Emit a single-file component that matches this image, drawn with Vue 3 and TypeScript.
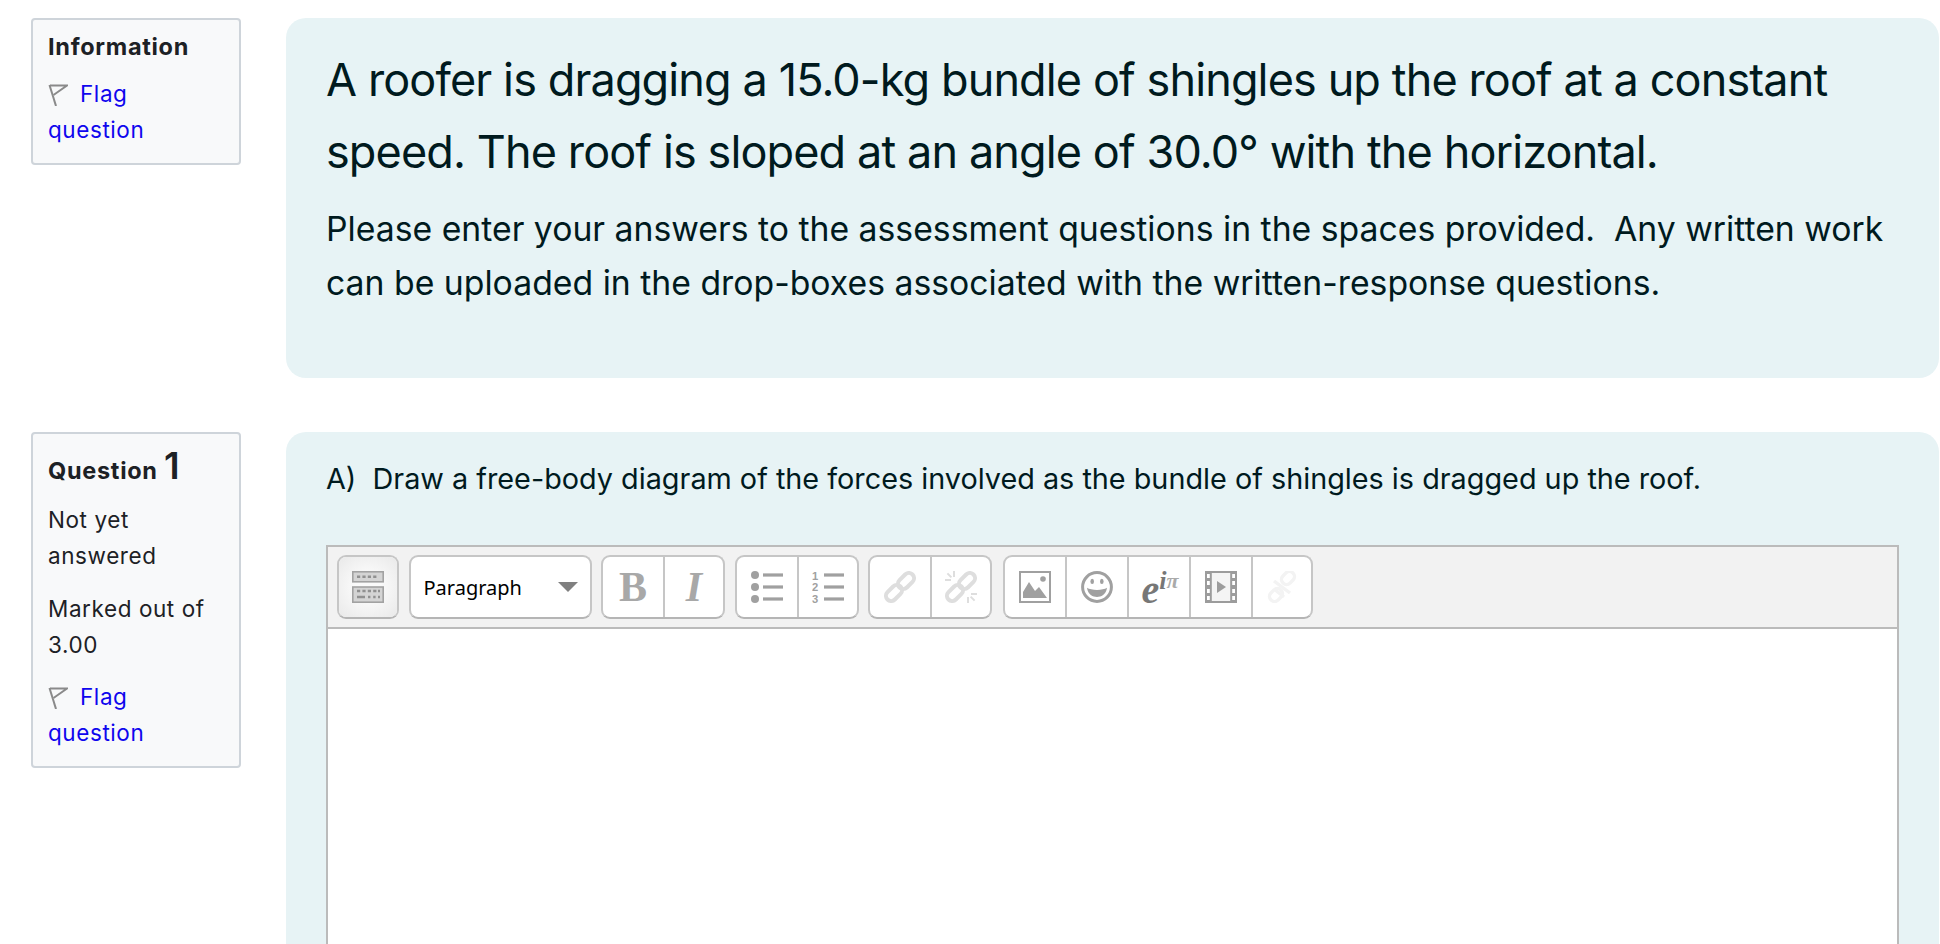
<script setup lang="ts">
</script>

<template>
  <div class="page">
    <section class="que">
      <aside class="info">
        <h3 class="label">Information</h3>
        <a class="flag" href="#">
          <svg class="flag-icon" viewBox="0 0 20 22"><path d="M1.5 1 L8 22" /><path d="M2 1.5 L19 1.5 L5.5 11" /></svg>Flag question
        </a>
      </aside>
      <div class="content content-intro">
        <p class="lead">A roofer is dragging a 15.0-kg bundle of shingles up the roof at a constant speed. The roof is sloped at an angle of 30.0° with the horizontal.</p>
        <p class="body">Please enter your answers to the assessment questions in the spaces provided.&nbsp; Any written work can be uploaded in the drop-boxes associated with the written-response questions.</p>
      </div>
    </section>

    <section class="que">
      <aside class="info">
        <h3 class="label label-q">Question <span class="qno">1</span></h3>
        <p class="state">Not yet answered</p>
        <p class="state state-last">Marked out of 3.00</p>
        <a class="flag" href="#">
          <svg class="flag-icon" viewBox="0 0 20 22"><path d="M1.5 1 L8 22" /><path d="M2 1.5 L19 1.5 L5.5 11" /></svg>Flag question
        </a>
      </aside>
      <div class="content content-q">
        <p class="prompt">A)&nbsp; Draw a free-body diagram of the forces involved as the bundle of shingles is dragged up the roof.</p>
        <div class="editor">
          <div class="toolbar">
            <div class="group">
              <button class="btn btn-on">
                <svg class="ico" viewBox="0 0 16 16">
                  <rect x="0.4" y="0.4" width="15.2" height="5" fill="#d4d4d4" stroke="#a2a2a2" stroke-width="0.8" />
                  <rect x="0.4" y="8" width="15.2" height="7.6" fill="#d4d4d4" stroke="#a2a2a2" stroke-width="0.8" />
                  <path d="M2.5 2.9h1.6M5.2 2.9h1.6M7.9 2.9h1.6M10.6 2.9h1.6M2.5 10h1.6M5.2 10h1.6M7.9 10h1.6M10.6 10h1.6M13 10h1M2.5 13h4M8 13h1.2M10.6 13h1.2M13 13h1" stroke="#909090" stroke-width="1.2" />
                </svg>
              </button>
            </div>
            <div class="group">
              <button class="select">
                <span>Paragraph</span>
                <i class="caret"></i>
              </button>
            </div>
            <div class="group">
              <button class="btn"><span class="glyph glyph-b">B</span></button>
              <button class="btn"><span class="glyph glyph-i">I</span></button>
            </div>
            <div class="group">
              <button class="btn">
                <svg class="ico" viewBox="0 0 16 16" fill="#a0a0a0">
                  <circle cx="2" cy="2" r="2" /><circle cx="2" cy="8" r="2" /><circle cx="2" cy="14" r="2" />
                  <rect x="6" y="1.2" width="10" height="1.6" /><rect x="6" y="7.2" width="10" height="1.6" /><rect x="6" y="13.2" width="10" height="1.6" />
                </svg>
              </button>
              <button class="btn">
                <svg class="ico" viewBox="0 0 16 16" fill="#a0a0a0">
                  <text class="ico-num" x="0" y="4.3">1</text><text class="ico-num" x="0" y="10.1">2</text><text class="ico-num" x="0" y="15.9">3</text>
                  <rect x="6" y="1.2" width="10" height="1.6" /><rect x="6" y="7.2" width="10" height="1.6" /><rect x="6" y="13.2" width="10" height="1.6" />
                </svg>
              </button>
            </div>
            <div class="group">
              <button class="btn">
                <svg class="ico" viewBox="0 0 16 16" fill="none" stroke="#dedede" stroke-width="2">
                  <rect x="6.4" y="2.4" width="9.2" height="5.2" rx="2.6" transform="rotate(-45 11 5)" />
                  <rect x="0.4" y="8.4" width="9.2" height="5.2" rx="2.6" transform="rotate(-45 5 11)" />
                </svg>
              </button>
              <button class="btn">
                <svg class="ico" viewBox="0 0 16 16" fill="none" stroke="#dedede" stroke-width="2">
                  <rect x="6.4" y="2.4" width="9.2" height="5.2" rx="2.6" transform="rotate(-45 11 5)" />
                  <rect x="0.4" y="8.4" width="9.2" height="5.2" rx="2.6" transform="rotate(-45 5 11)" />
                  <path d="M0 4.5h3M4.5 0v3M1.2 1.2l2 2M16 11.5h-3M11.5 16v-3M14.8 14.8l-2-2" stroke-width="1" />
                </svg>
              </button>
            </div>
            <div class="group group-media">
              <button class="btn">
                <svg class="ico" viewBox="0 0 16 16">
                  <rect x="0.5" y="0.5" width="15" height="15" fill="#fff" stroke="#a0a0a0" />
                  <path d="M2 13.5 L2 10.5 L5 5.5 L8 10 L10 8 L14 13.5 Z" fill="#a0a0a0" />
                  <circle cx="12" cy="4" r="1.4" fill="#a0a0a0" />
                </svg>
              </button>
              <button class="btn">
                <svg class="ico" viewBox="0 0 16 16" fill="none" stroke="#a0a0a0">
                  <circle cx="8" cy="8" r="7.2" stroke-width="1.5" />
                  <ellipse cx="5.6" cy="5.2" rx="0.9" ry="1.3" fill="#a0a0a0" stroke="none" />
                  <ellipse cx="10.4" cy="5.2" rx="0.9" ry="1.3" fill="#a0a0a0" stroke="none" />
                  <path d="M3 8.4 C5 9.8 11 9.8 13 8.4 C12.5 12 10 13 8 13 C6 13 3.5 12 3 8.4 Z" fill="#a0a0a0" stroke="none" />
                </svg>
              </button>
              <button class="btn">
                <span class="eq"><span class="eq-e">e</span><span class="eq-i">i</span><span class="eq-p">π</span></span>
              </button>
              <button class="btn">
                <svg class="ico" viewBox="0 0 16 16">
                  <rect width="16" height="16" fill="#9c9c9c" />
                  <rect x="3.4" y="1" width="9.2" height="14" fill="#f4f4f4" />
                  <path d="M1 1.5h1.4v2H1zM1 5h1.4v2H1zM1 9h1.4v2H1zM1 12.5h1.4v2H1zM13.6 1.5H15v2h-1.4zM13.6 5H15v2h-1.4zM13.6 9H15v2h-1.4zM13.6 12.5H15v2h-1.4z" fill="#fff" />
                  <path d="M6 5 L10.5 8 L6 11 Z" fill="#9c9c9c" />
                </svg>
              </button>
              <button class="btn">
                <svg class="ico" viewBox="0 0 16 16" fill="none" stroke="#f3f3f3" stroke-width="1.7">
                  <rect x="7.5" y="1" width="7" height="5" rx="2.4" transform="rotate(-45 11 3.5)" />
                  <rect x="1.5" y="9.5" width="7" height="5" rx="2.4" transform="rotate(-45 5 12)" />
                  <path d="M4 5 L12 11 M4 9 L9 13" />
                </svg>
              </button>
            </div>
          </div>
          <div class="area"></div>
        </div>
      </div>
    </section>
  </div>
</template>

<style scoped>
.page {
  height: 944px;
  overflow: hidden;
  box-sizing: border-box;
  padding: 18px 1px 0 31px;
  background: #fff;
  font-family: Inter, "Noto Sans", sans-serif;
  display: flex;
  flex-direction: column;
  gap: 54px;
}
.que {
  display: flex;
  align-items: flex-start;
  gap: 45px;
}
.info {
  width: 210px;
  flex: none;
  box-sizing: border-box;
  padding: 11px 15px 15px;
  background: #f8f9fa;
  border: 2px solid #ced4da;
  border-radius: 4px;
  color: #1d2125;
  font-size: 22.5px;
  letter-spacing: 0.58px;
  line-height: 36px;
}
.label {
  margin: 0 0 13px;
  font-size: 23.5px;
  letter-spacing: 0.7px;
  font-weight: 700;
  line-height: 32px;
}
.label-q {
  padding-top: 5px;
  margin-bottom: 15px;
}
.qno {
  font-size: 37px;
  font-weight: 600;
  letter-spacing: 0;
  line-height: 32px;
}
.state {
  margin: 0 0 17px;
}
.state-last {
  margin-bottom: 16px;
}
.flag {
  display: block;
  color: #0f06ee;
  text-decoration: none;
}
.flag-icon {
  width: 20px;
  height: 22px;
  margin-right: 12px;
  vertical-align: -4px;
  fill: none;
  stroke: #8a8a8a;
  stroke-width: 2;
}
.content {
  flex: 1;
  box-sizing: border-box;
  background: #e7f3f5;
  border-radius: 20px;
  padding: 0 40px;
  color: #001a1e;
}
.content-intro {
  height: 360px;
  padding-top: 26px;
}
.content-q {
  height: 600px;
  padding-top: 27px;
}
.lead {
  margin: 0 0 14px;
  font-size: 45px;
  letter-spacing: -0.88px;
  line-height: 72px;
}
.body {
  margin: 0;
  font-size: 33.75px;
  line-height: 54px;
}
.prompt {
  margin: 0 0 46px;
  font-size: 28.8px;
  line-height: 40px;
}
.editor {
  width: 1569px;
  border: 2px solid #bbb;
  border-bottom: none;
}
.toolbar {
  display: flex;
  gap: 9.5px;
  height: 82px;
  box-sizing: border-box;
  padding: 8px 9px;
  background: #f2f2f2;
  border-bottom: 2px solid #bbb;
}
.group {
  display: flex;
  height: 64px;
  box-sizing: border-box;
  background: #fff;
  border: 2px solid #c6c6c6;
  border-bottom-color: #b5b5b5;
  border-radius: 9px;
}
.group-media {
  margin-left: 1px;
}
.btn {
  width: 62px;
  height: 100%;
  padding: 0;
  display: flex;
  align-items: center;
  justify-content: center;
  background: transparent;
  border: none;
  border-right: 2px solid #c6c6c6;
}
.btn:last-child {
  border-right: none;
  width: 58px;
}
.btn-on {
  border-radius: 7px;
  background: radial-gradient(circle, #fafafa 30%, #e9e9e9 100%);
}
.ico {
  width: 32px;
  height: 32px;
  display: block;
}
.ico-num {
  font-family: "Liberation Sans", sans-serif;
  font-size: 5.6px;
  font-weight: 700;
  fill: #a0a0a0;
}
.glyph {
  font-family: "Liberation Serif", serif;
  font-size: 42px;
  line-height: 1;
  font-weight: 700;
  color: #a8a8a8;
}
.glyph-i {
  font-style: italic;
}
.eq {
  font-family: "Liberation Serif", serif;
  font-style: italic;
  font-weight: 700;
  color: #777;
  line-height: 1;
  display: flex;
  align-items: flex-start;
  height: 36px;
  padding-left: 3px;
}
.eq-e {
  font-size: 40px;
  margin-top: 1px;
}
.eq-i {
  font-size: 26px;
  margin-top: -1px;
}
.eq-p {
  font-size: 22px;
  font-weight: 700;
  color: #aaa;
  margin-top: 1px;
}
.select {
  width: 179px;
  height: 100%;
  box-sizing: border-box;
  padding: 0 12px 0 13px;
  display: flex;
  align-items: center;
  justify-content: space-between;
  background: transparent;
  border: none;
  font-family: "Noto Sans", sans-serif;
  font-size: 20px;
  color: #000;
}
.caret {
  width: 0;
  height: 0;
  border-left: 10px solid transparent;
  border-right: 10px solid transparent;
  border-top: 10px solid #808080;
}
.area {
  height: 500px;
  background: #fff;
}
</style>
